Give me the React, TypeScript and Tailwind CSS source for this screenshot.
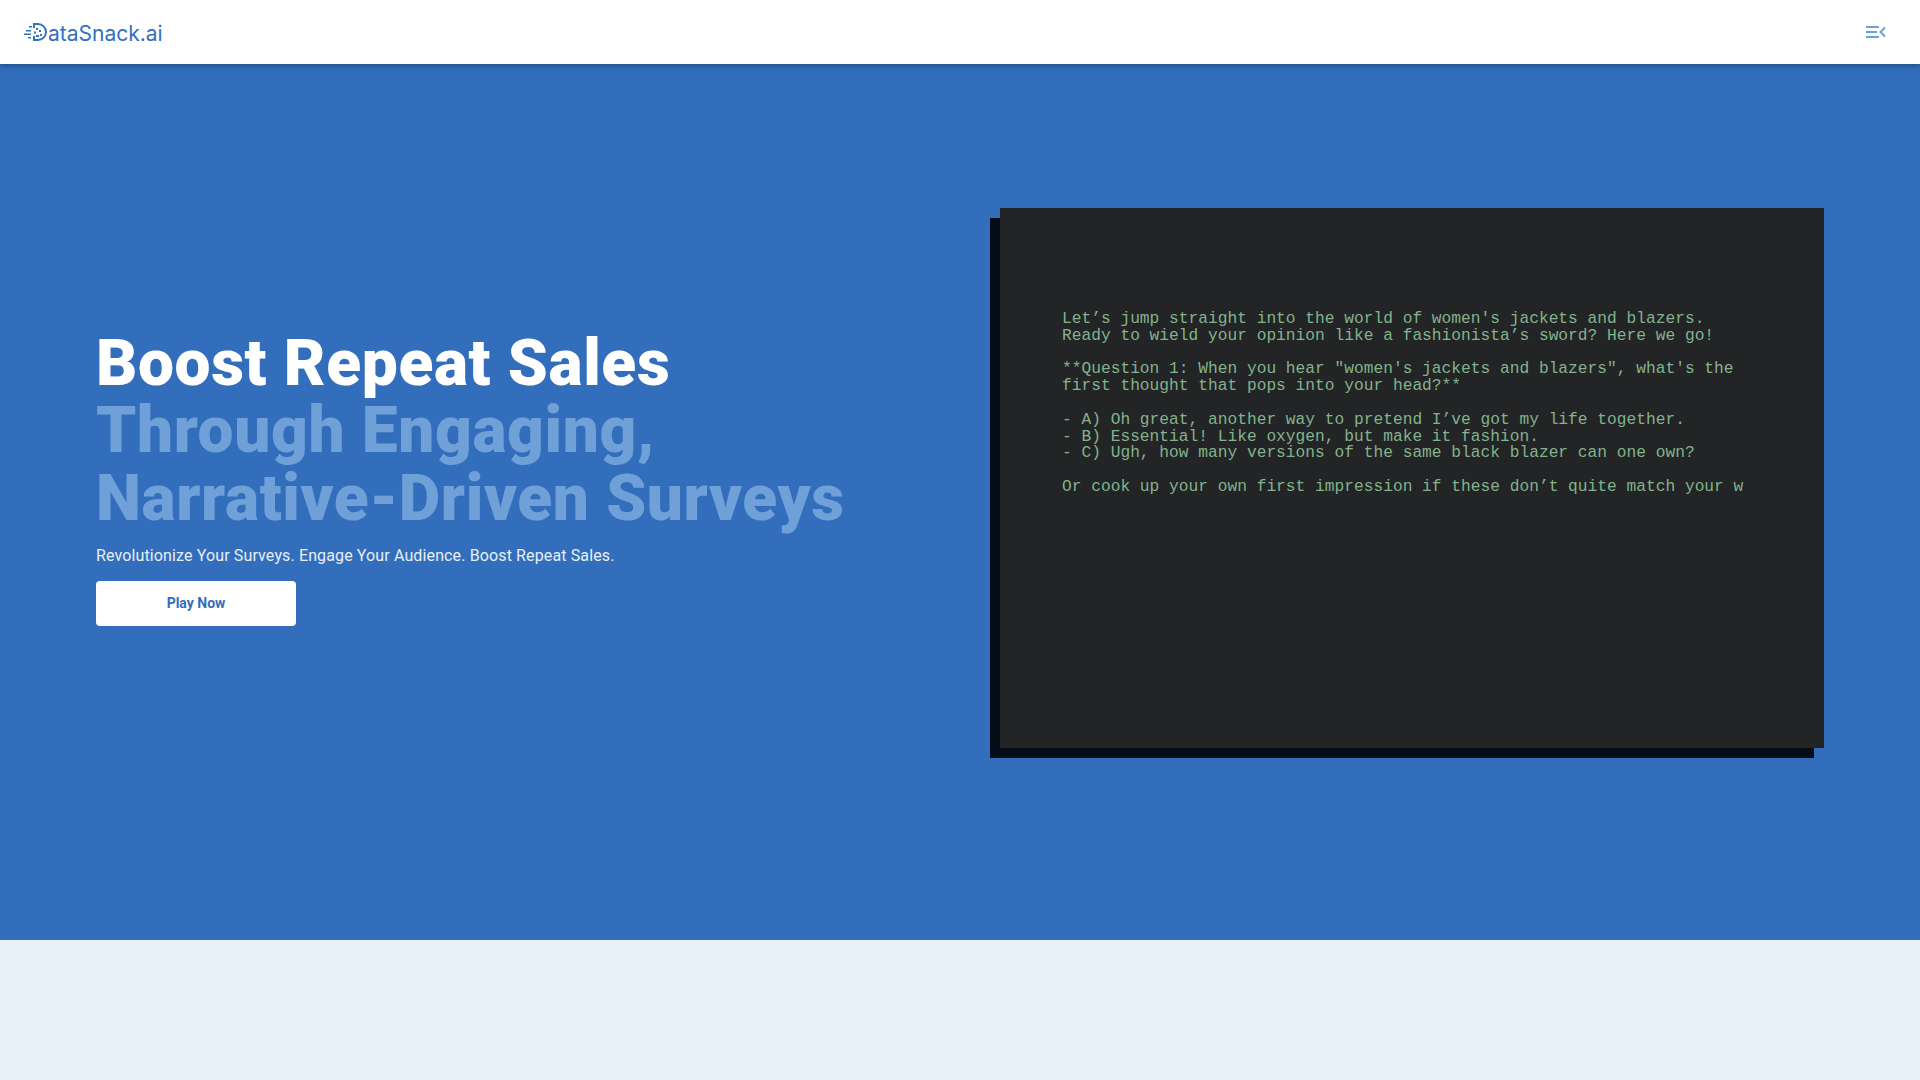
import React from 'react';

const terminalText = `Let’s jump straight into the world of women's jackets and blazers.
Ready to wield your opinion like a fashionista’s sword? Here we go!

**Question 1: When you hear "women's jackets and blazers", what's the
first thought that pops into your head?**

- A) Oh great, another way to pretend I’ve got my life together.
- B) Essential! Like oxygen, but make it fashion.
- C) Ugh, how many versions of the same black blazer can one own?

Or cook up your own first impression if these don’t quite match your w`;

function LogoMark() {
    return (
        <svg width="24" height="20" viewBox="0 0 24 20" fill="none" className="shrink-0">
            <path d="M9 1h5a8 8 0 0 1 0 16H9" stroke="#3370be" strokeWidth="2" />
            <path d="M10 1v4M10 13v4" stroke="#3370be" strokeWidth="2" />
            <g fill="#3370be">
                <rect x="5" y="3" width="3" height="1.5" />
                <rect x="2" y="7" width="5" height="1.5" />
                <rect x="0" y="10.5" width="7" height="1.5" />
                <rect x="4" y="14" width="3" height="1.5" />
                <rect x="12" y="5" width="2" height="2" />
                <rect x="15" y="7" width="2" height="2" />
                <rect x="10" y="8.5" width="2" height="2" />
                <rect x="16" y="11" width="2" height="2" />
                <rect x="12" y="12" width="3" height="2" />
            </g>
        </svg>
    );
}

function MenuIcon() {
    return (
        <svg width="20" height="14" viewBox="0 0 20 14" fill="none" stroke="#6fa1d8" strokeWidth="2">
            <path d="M0 2h13M0 7h11M0 12h13" />
            <path d="M19 2.5 14.5 7l4.5 4.5" />
        </svg>
    );
}

export default function App() {
    return (
        <div className="min-h-screen bg-[#e7eff7] font-['Roboto',sans-serif]">
            <nav className="relative z-10 flex h-16 items-center justify-between bg-white pl-6 pr-[34px] shadow-[0_2px_6px_rgba(0,0,0,0.3)]">
                <div className="flex items-center pt-[2px] font-['Inter',sans-serif] text-[21px] leading-none text-[#3370be]">
                    <LogoMark />
                    <span>ataSnack.ai</span>
                </div>
                <MenuIcon />
            </nav>

            <section className="flex h-[876px] items-center justify-between bg-[#336ebd] px-24 pb-12">
                <div className="flex flex-col">
                    <h1 className="text-[64px] leading-[1.05] font-black tracking-[0.01em] text-white">
                        Boost Repeat Sales
                        <br />
                        <span className="text-[#6fa1d8]">
                            Through Engaging,
                            <br />
                            Narrative-Driven Surveys
                        </span>
                    </h1>
                    <p className="mt-3 text-base leading-6 tracking-[0.008em] text-[#e7eff7]">
                        Revolutionize Your Surveys. Engage Your Audience. Boost Repeat Sales.
                    </p>
                    <button className="mt-[13px] h-[45px] w-[200px] rounded-[4px] bg-white text-sm font-bold text-[#336ebd]">
                        Play Now
                    </button>
                </div>

                <div className="flex h-[540px] w-[824px] items-start bg-[#232425] pt-[103px] pl-[62px] shadow-[-10px_10px_0_#020d17]">
                    <pre className="font-['Liberation_Mono',monospace] text-[16.23px] leading-[16.8px] text-[#82b38d]">
                        {terminalText}
                    </pre>
                </div>
            </section>

            <div className="h-[140px]" />
        </div>
    );
}
